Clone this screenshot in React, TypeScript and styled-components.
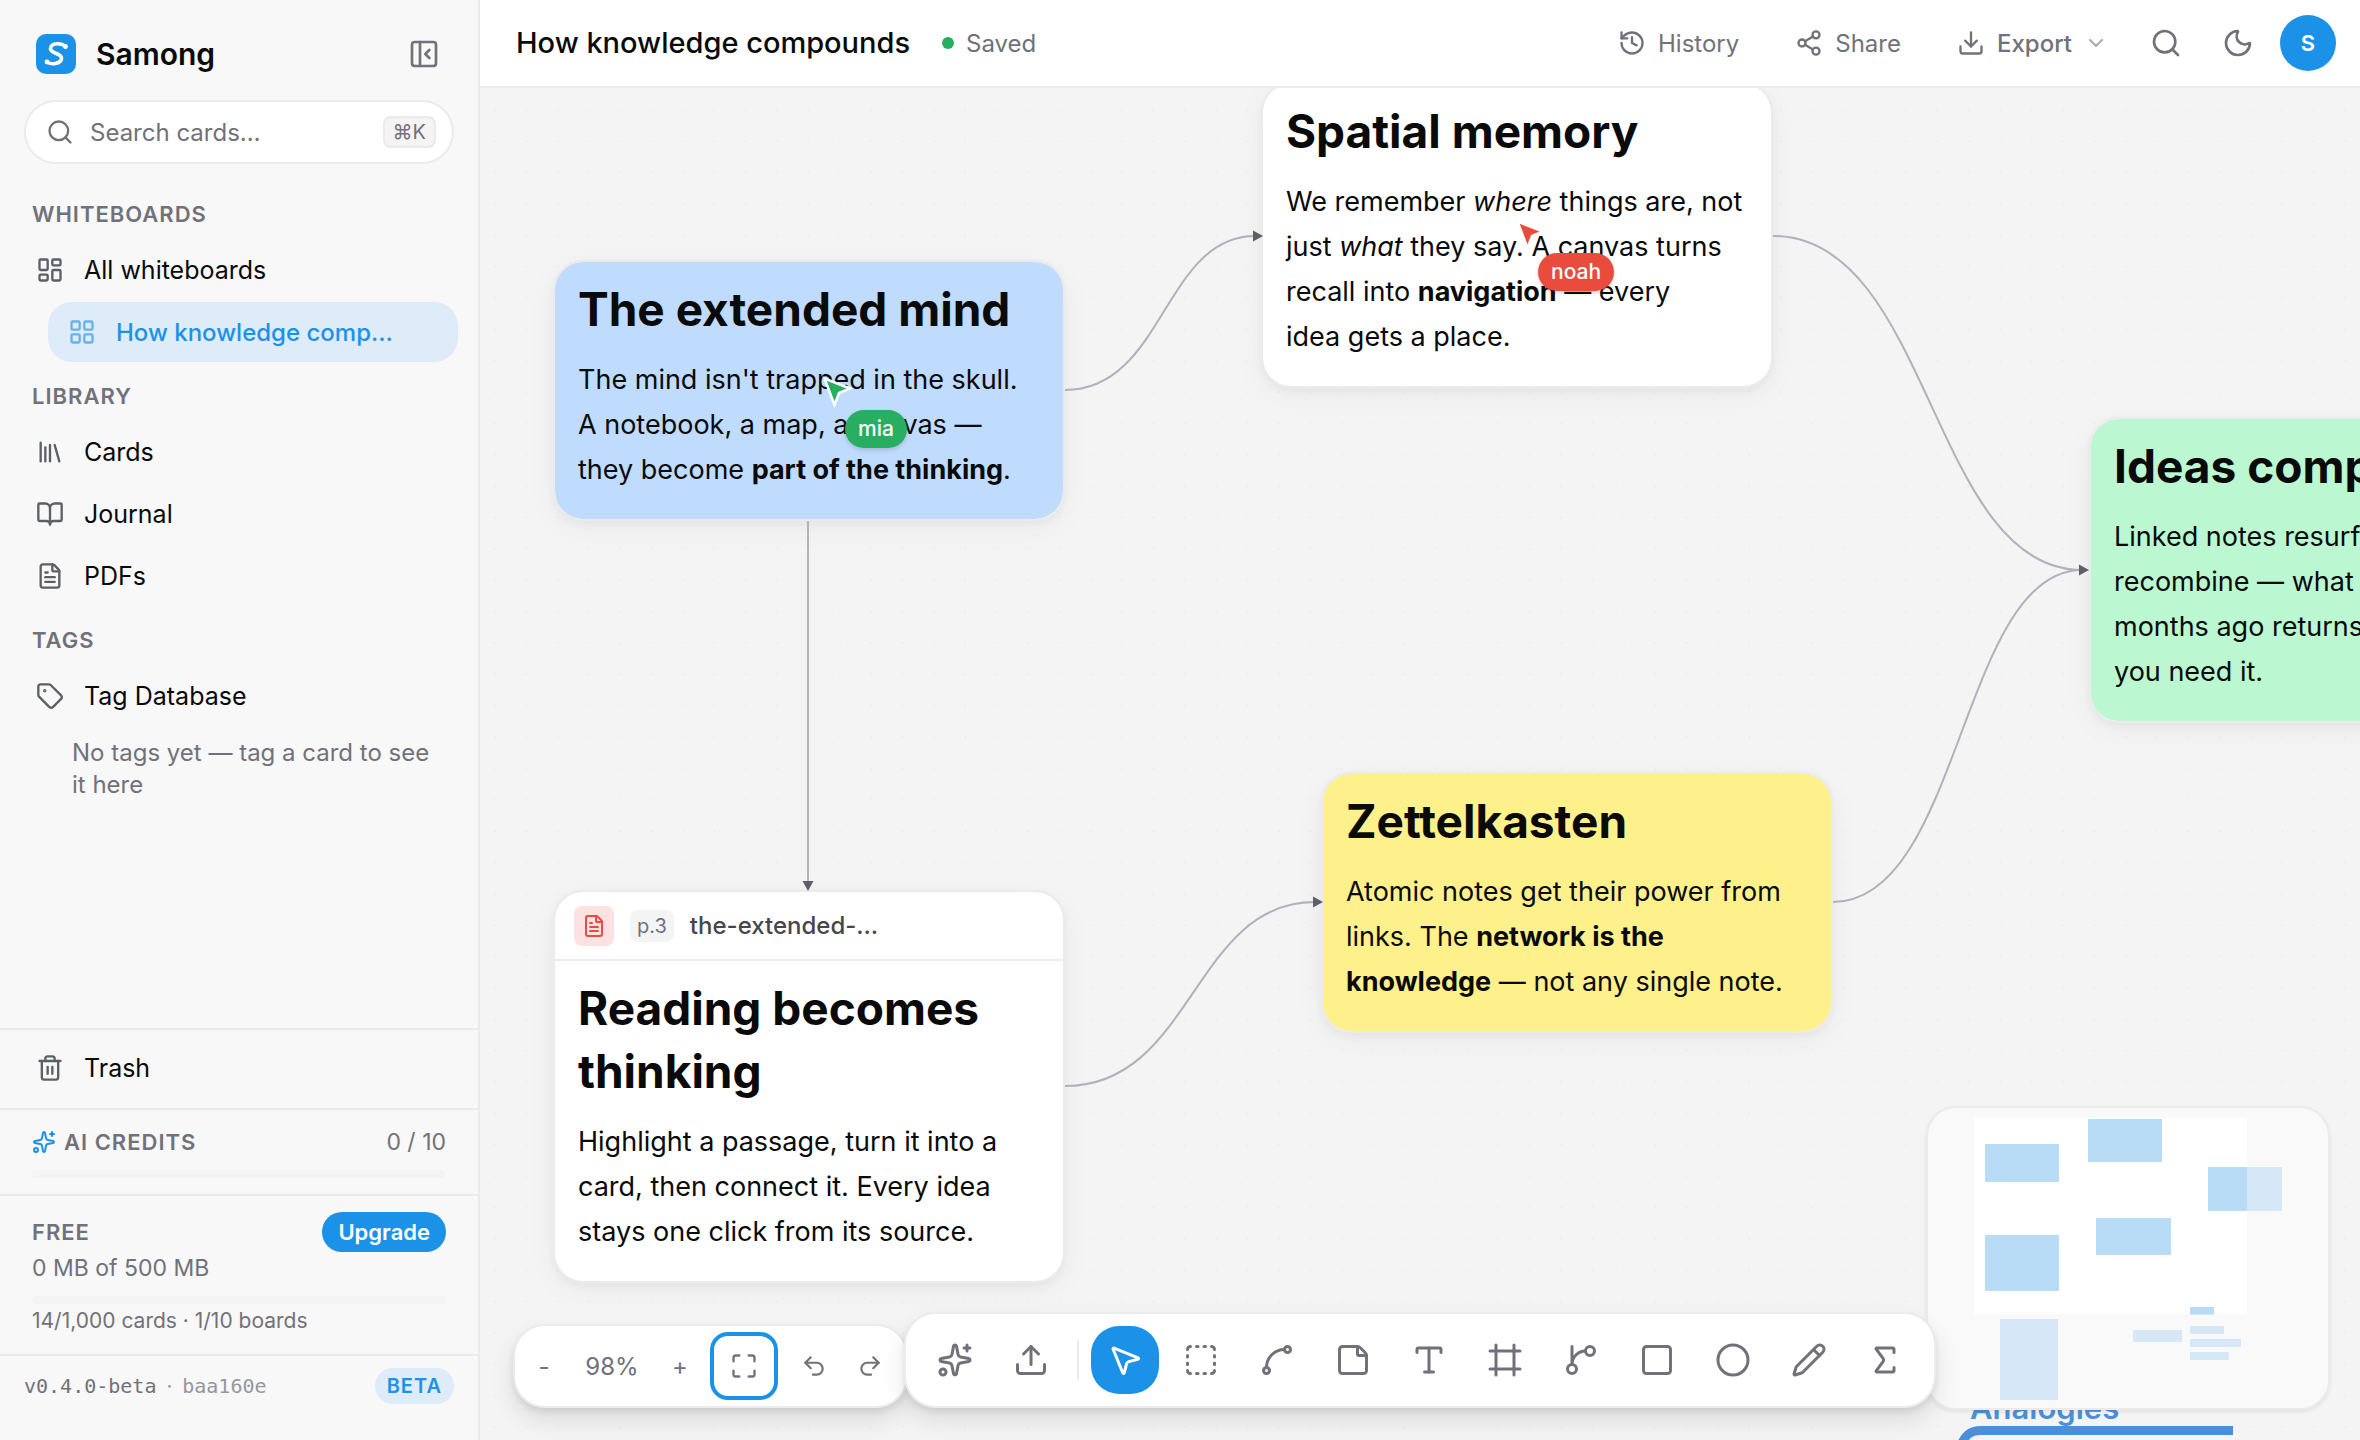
import React from "react";
import styled, { createGlobalStyle, css } from "styled-components";
import {
  BookOpen, ChevronDown, Circle, Download, FileText, Frame, History, LayoutDashboard,
  LayoutGrid, Library, Maximize, Moon, MousePointer2, PanelLeftClose, Pencil, Redo2, Search, Share2,
  Sigma, Sparkles, Spline, Square, SquareDashed, StickyNote, Tag, Trash2, Type, Undo2, Upload,
} from "lucide-react";

const blue = "#1b92e8";
const muted = "#71717a";
const ink = "#0a0a0b";
const line = "#ebebeb";

const Global = createGlobalStyle`
  *, *::before, *::after { box-sizing: border-box; }
  body { margin: 0; background: #f4f4f4; color: ${ink}; font-family: Inter, "Liberation Sans", sans-serif; }
  button, input { font: inherit; color: inherit; }
  button { border: 0; background: none; padding: 0; display: flex; align-items: center; cursor: pointer; }
  h1, h2, h3, p { margin: 0; }
  svg { display: block; flex: none; }
`;

const Shell = styled.div`
  display: grid;
  grid-template-columns: 480px minmax(0, 1fr);
  height: 100vh;
  overflow: hidden;
`;

/* ---------- sidebar ---------- */

const Sidebar = styled.aside`
  display: flex;
  flex-direction: column;
  min-height: 0;
  background: #f8f8f8;
  border-right: 2px solid ${line};
`;

const Brand = styled.div`
  display: flex;
  align-items: center;
  gap: 20px;
  height: 100px;
  padding: 8px 38px 0 36px;
`;

const BrandName = styled.h2`
  flex: 1;
  font-size: 30px;
  font-weight: 600;
  line-height: 40px;
`;

const IconButton = styled.button<{ $size: number }>`
  justify-content: center;
  width: ${(p) => p.$size}px;
  height: ${(p) => p.$size}px;
  color: ${muted};
`;

const SearchBox = styled.label`
  display: flex;
  align-items: center;
  gap: 16px;
  height: 64px;
  margin: 0 24px 16px;
  padding: 0 16px 0 20px;
  background: #fff;
  border: 2px solid ${line};
  border-radius: 32px;
  color: ${muted};
`;

const SearchInput = styled.input`
  flex: 1;
  min-width: 0;
  border: 0;
  outline: 0;
  padding: 0;
  background: transparent;
  font-size: 24px;
  &::placeholder { color: ${muted}; opacity: 1; }
`;

const Kbd = styled.kbd`
  height: 32px;
  padding: 0 8px;
  border: 2px solid ${line};
  border-radius: 8px;
  background: #f4f4f4;
  font-family: inherit;
  font-size: 20px;
  line-height: 28px;
`;

const Nav = styled.nav`
  flex: 1;
  min-height: 0;
`;

const SectionLabel = styled.h3`
  padding: 16px 32px 8px;
  font-size: 22px;
  font-weight: 600;
  line-height: 36px;
  letter-spacing: 1px;
  color: ${muted};
`;

const NavItem = styled.a<{ $active?: boolean }>`
  display: flex;
  align-items: center;
  gap: 20px;
  height: 60px;
  margin: 0 20px 0 16px;
  padding: 0 20px;
  border-radius: 24px;
  font-size: 25px;
  text-decoration: none;
  color: ${ink};
  svg { color: #5b5f66; }
  & + & { margin-top: 2px; }
  ${(p) => p.$active && css`
    margin-left: 48px;
    background: #deebf8;
    color: ${blue};
    font-size: 24px;
    font-weight: 500;
    svg { color: #68b2ec; }
  `}
`;

const EmptyNote = styled.p`
  padding: 11px 32px 0 72px;
  font-size: 24px;
  line-height: 32px;
  color: ${muted};
`;

const Panel = styled.section<{ $pad: string }>`
  border-top: 2px solid ${line};
  padding: ${(p) => p.$pad};
`;

const PanelRow = styled.div`
  display: flex;
  align-items: center;
  justify-content: space-between;
  color: ${muted};
`;

const PanelTitle = styled.h3`
  display: flex;
  align-items: center;
  gap: 8px;
  font-size: 22px;
  font-weight: 600;
  line-height: 32px;
  letter-spacing: 1px;
  svg { color: ${blue}; }
`;

const PanelText = styled.p<{ $size?: number }>`
  font-size: ${(p) => p.$size || 23}px;
  line-height: 32px;
  color: ${muted};
`;

const Meter = styled.div`
  height: 8px;
  margin: 12px 0 1px;
  border-radius: 4px;
  background: #f4f4f4;
`;

const Upgrade = styled.button`
  height: 40px;
  padding: 0 16px;
  border-radius: 20px;
  background: ${blue};
  color: #fff;
  font-size: 22px;
  font-weight: 600;
`;

const Version = styled.p`
  display: flex;
  gap: 10px;
  font-family: "DejaVu Sans Mono", monospace;
  font-size: 20px;
  line-height: 32px;
`;

const Build = styled.span`
  display: flex;
  gap: 10px;
  color: #96969c;
  &::before {
    content: "·";
    font-family: Inter, sans-serif;
  }
`;

const Beta = styled.span`
  height: 36px;
  padding: 0 12px;
  border-radius: 18px;
  background: #deebf8;
  color: ${blue};
  font-size: 20px;
  font-weight: 600;
  line-height: 36px;
  letter-spacing: 1px;
`;

/* ---------- header ---------- */

const Main = styled.main`
  display: flex;
  flex-direction: column;
  min-width: 0;
  min-height: 0;
`;

const Header = styled.header`
  display: flex;
  align-items: center;
  height: 88px;
  flex: none;
  padding: 0 24px 0 36px;
  background: #fff;
  border-bottom: 2px solid ${line};
`;

const Title = styled.h1`
  font-size: 29px;
  font-weight: 500;
  line-height: 40px;
`;

const Saved = styled.span`
  display: flex;
  align-items: center;
  gap: 12px;
  margin-left: 32px;
  font-size: 24px;
  color: ${muted};
  &::before {
    content: "";
    width: 12px;
    height: 12px;
    border-radius: 6px;
    background: #27ae60;
  }
`;

const Actions = styled.div`
  display: flex;
  align-items: center;
  gap: 8px;
  margin: 0 4px 0 auto;
`;

const Utilities = styled.div`
  display: flex;
  align-items: center;
  gap: 12px;
`;

const Action = styled.button<{ $strong?: boolean }>`
  gap: 12px;
  height: 64px;
  padding: 0 24px;
  font-size: 24px;
  font-weight: ${(p) => (p.$strong ? 500 : 400)};
  color: ${muted};
`;

const Avatar = styled.button`
  justify-content: center;
  width: 56px;
  height: 56px;
  border-radius: 28px;
  background: ${blue};
  color: #fff;
  font-size: 22px;
  font-weight: 600;
`;

/* ---------- canvas ---------- */

const Canvas = styled.div`
  position: relative;
  flex: 1;
  min-height: 0;
  overflow: hidden;
  background: #f4f4f4;
`;

const EdgeLayer = styled.svg`
  position: absolute;
  inset: 0;
  width: 100%;
  height: 100%;
`;

const Card = styled.article<{ $x: number; $y: number; $fill?: string }>`
  position: absolute;
  left: ${(p) => p.$x}px;
  top: ${(p) => p.$y}px;
  width: 512px;
  overflow: hidden;
  border: 2px solid ${line};
  border-radius: 30px;
  background: ${(p) => p.$fill || "#fff"};
  background-clip: padding-box;
  box-shadow: 0 4px 8px rgba(0, 0, 0, 0.04), 0 8px 32px rgba(0, 0, 0, 0.04);
`;

const CardBody = styled.div`
  padding: 16px 22px 27px 23px;
  h2 { font-size: 46px; font-weight: 700; line-height: 63px; margin-bottom: 16px; }
  p { font-size: 27px; line-height: 45px; }
`;

const SourceBar = styled.div`
  display: flex;
  align-items: center;
  gap: 16px;
  height: 69px;
  padding: 0 19px;
  border-bottom: 2px solid ${line};
  font-size: 24px;
  font-weight: 500;
  color: #46464c;
`;

const PdfBadge = styled.span`
  display: flex;
  align-items: center;
  justify-content: center;
  width: 40px;
  height: 40px;
  border-radius: 8px;
  background: #fee2e2;
  color: #e94b3c;
`;

const PageBadge = styled.span`
  height: 32px;
  padding: 0 7px;
  border-radius: 8px;
  background: #f4f4f5;
  color: ${muted};
  font-size: 20px;
  font-weight: 400;
  line-height: 32px;
`;

const Cursor = styled.div<{ $x: number; $y: number }>`
  position: absolute;
  left: ${(p) => p.$x}px;
  top: ${(p) => p.$y}px;
`;

const CursorName = styled.span<{ $color: string }>`
  display: block;
  height: 38px;
  margin: -2px 0 0 23px;
  padding: 0 13px;
  border-radius: 19px;
  background: ${(p) => p.$color};
  color: #fff;
  font-size: 21px;
  font-weight: 500;
  line-height: 38px;
  box-shadow: 0 2px 4px rgba(0, 0, 0, 0.16);
`;

const BranchLabel = styled.span`
  position: absolute;
  left: 1490px;
  top: 1301px;
  font-size: 31px;
  font-weight: 600;
  line-height: 38px;
  color: #4a90d9;
`;

const MiniMap = styled.div`
  position: absolute;
  right: 30px;
  bottom: 30px;
  border: 2px solid ${line};
  border-radius: 30px;
  overflow: hidden;
  background: #f9f9f9;
  box-shadow: 0 2px 4px rgba(0, 0, 0, 0.08);
`;

const Bar = styled.div`
  position: absolute;
  bottom: 32px;
  display: flex;
  align-items: center;
  border: 2px solid ${line};
  border-radius: 32px;
  background: #fff;
  color: ${muted};
  box-shadow: 0 4px 6px rgba(0, 0, 0, 0.08), 0 12px 24px rgba(0, 0, 0, 0.1);
`;

const ZoomBar = styled(Bar)`
  left: 33px;
  height: 84px;
  padding: 0 8px 0 1px;
`;

const ToolBar = styled(Bar)`
  left: 50%;
  transform: translateX(-50%);
  height: 96px;
  gap: 8px;
  padding: 0 15px;
`;

const ZoomButton = styled.button<{ $focus?: boolean }>`
  justify-content: center;
  width: ${(p) => (p.$focus ? 68 : 56)}px;
  height: ${(p) => (p.$focus ? 68 : 56)}px;
  font-size: 24px;
  ${(p) => p.$focus && css`
    margin: 0 8px 0 2px;
    border: 4px solid ${blue};
    border-radius: 18px;
  `}
`;

const ZoomValue = styled.output`
  width: 80px;
  font-size: 24px;
  text-align: center;
`;

const Tool = styled.button<{ $active?: boolean }>`
  justify-content: center;
  width: 68px;
  height: 68px;
  border-radius: 28px;
  ${(p) => p.$active && css`
    background: ${blue};
    color: #fff;
  `}
`;

const Divider = styled.span`
  width: 2px;
  height: 40px;
  margin: 0 4px;
  background: ${line};
`;

const Logo = () => (
  <svg width="40" height="40" viewBox="0 0 40 40" aria-hidden="true">
    <rect width="40" height="40" rx="10" fill={blue} />
    <path
      d="M29.5 13C27 9.5 15.5 7.5 14.5 14.5C13.8 19.5 26 19 25.5 24.5C25 30 14.5 31 11 28"
      fill="none" stroke="#fff" strokeWidth="3.6" strokeLinecap="round"
    />
    <circle cx="29.5" cy="12.5" r="2.4" fill="#fff" />
    <circle cx="11" cy="28" r="2.4" fill="#fff" />
  </svg>
);

const Branch = ({ size = 24 }: { size?: number }) => (
  <svg
    width={size} height={size} viewBox="0 0 24 24" fill="none" stroke="currentColor"
    strokeWidth="2" strokeLinecap="round" strokeLinejoin="round" aria-hidden="true"
  >
    <path d="M15 6a9 9 0 0 0-9 9V3" />
    <circle cx="18" cy="6" r="3" />
    <circle cx="6" cy="18" r="3" />
  </svg>
);

const edges = [
  "M585 302C684 302 684 148 775 148",
  "M1293 148C1451 148 1451 482 1602 482",
  "M328 433V796",
  "M585 998C713 998 713 814 835 814",
  "M1353 814C1481 814 1481 482 1602 482",
];

const arrows = [
  "M773 142.500L783 148L773 153.500Z",
  "M1599 476.500L1609 482L1599 487.500Z",
  "M833 808.500L843 814L833 819.500Z",
  "M322.500 793L328 803L333.500 793Z",
];

const mapNodes = [
  [57, 36, 74, 38], [160, 11, 74, 43], [280, 59, 74, 44], [168, 110, 75, 37], [57, 127, 74, 56],
  [72, 211, 58, 81], [205, 222, 49, 12], [262, 199, 24, 8], [262, 218, 34, 8], [262, 231, 51, 8], [262, 244, 39, 8],
];

const tools: [string, React.ElementType][] = [
  ["Marquee", SquareDashed], ["Connector", Spline], ["Card", StickyNote], ["Text", Type], ["Frame", Frame],
  ["Mind map", Branch], ["Rectangle", Square], ["Ellipse", Circle], ["Draw", Pencil], ["Formula", Sigma],
];

const Pointer = ({ color }: { color: string }) => (
  <svg width="36" height="36" viewBox="0 0 36 36" aria-hidden="true">
    <path d="M2.500 2.500L28 12.500L17 17L12.500 29Z" fill={color} stroke="#fff" strokeWidth="2.500" />
  </svg>
);

export default function App() {
  return (
    <Shell>
      <Global />
      <Sidebar>
        <Brand>
          <Logo />
          <BrandName>Samong</BrandName>
          <IconButton $size={32} aria-label="Collapse sidebar"><PanelLeftClose size={32} /></IconButton>
        </Brand>
        <SearchBox>
          <Search size={28} />
          <SearchInput type="text" placeholder="Search cards…" aria-label="Search cards" />
          <Kbd>⌘K</Kbd>
        </SearchBox>
        <Nav>
          <SectionLabel>WHITEBOARDS</SectionLabel>
          <NavItem href="#all"><LayoutDashboard size={28} />All whiteboards</NavItem>
          <NavItem href="#board" $active><LayoutGrid size={28} />How knowledge comp…</NavItem>
          <SectionLabel>LIBRARY</SectionLabel>
          <NavItem href="#cards"><Library size={28} />Cards</NavItem>
          <NavItem href="#journal"><BookOpen size={28} />Journal</NavItem>
          <NavItem href="#pdfs"><FileText size={28} />PDFs</NavItem>
          <SectionLabel>TAGS</SectionLabel>
          <NavItem href="#tags"><Tag size={28} />Tag Database</NavItem>
          <EmptyNote>No tags yet — tag a card to see it here</EmptyNote>
        </Nav>
        <Panel $pad="8px 0 10px">
          <NavItem href="#trash"><Trash2 size={28} />Trash</NavItem>
        </Panel>
        <Panel $pad="16px 32px 15px">
          <PanelRow>
            <PanelTitle><Sparkles size={24} />AI CREDITS</PanelTitle>
            <PanelText>0 / 10</PanelText>
          </PanelRow>
          <Meter />
        </Panel>
        <Panel $pad="16px 32px 17px">
          <PanelRow>
            <PanelTitle>FREE</PanelTitle>
            <Upgrade>Upgrade</Upgrade>
          </PanelRow>
          <PanelText>0 MB of 500 MB</PanelText>
          <Meter />
          <PanelText $size={21}>14/1,000 cards · 1/10 boards</PanelText>
        </Panel>
        <Panel $pad="12px 24px 36px">
          <PanelRow>
            <Version>v0.4.0-beta<Build>baa160e</Build></Version>
            <Beta>BETA</Beta>
          </PanelRow>
        </Panel>
      </Sidebar>

      <Main>
        <Header>
          <Title>How knowledge compounds</Title>
          <Saved>Saved</Saved>
          <Actions>
            <Action><History size={28} />History</Action>
            <Action><Share2 size={28} />Share</Action>
            <Action $strong><Download size={28} />Export<ChevronDown size={24} opacity={0.6} /></Action>
          </Actions>
          <Utilities>
            <IconButton $size={60} aria-label="Search"><Search size={32} /></IconButton>
            <IconButton $size={60} aria-label="Dark mode"><Moon size={32} /></IconButton>
            <Avatar aria-label="Account">S</Avatar>
          </Utilities>
        </Header>

        <Canvas>
          <EdgeLayer aria-hidden="true">
            <defs>
              <pattern id="dots" x="-1" y="5" width="31.360" height="31.360" patternUnits="userSpaceOnUse">
                <circle cx="16" cy="17" r="1" fill="#ebebed" />
              </pattern>
            </defs>
            <rect width="100%" height="100%" fill="url(#dots)" />
          </EdgeLayer>

          <Card $x={73} $y={172} $fill="#bfdbfe">
            <CardBody>
              <h2>The extended mind</h2>
              <p>The mind isn't trapped in the skull. A notebook, a map, a canvas — they become <b>part of the thinking</b>.</p>
            </CardBody>
          </Card>
          <Card $x={781} $y={-6}>
            <CardBody>
              <h2>Spatial memory</h2>
              <p>We remember <em>where</em> things are, not just <em>what</em> they say. A canvas turns recall into <b>navigation</b> — every<br />idea gets a place.</p>
            </CardBody>
          </Card>
          <Card $x={1609} $y={329} $fill="#bbf7d0">
            <CardBody>
              <h2>Ideas compound</h2>
              <p>Linked notes resurface and recombine — what you wrote months ago returns right when<br />you need it.</p>
            </CardBody>
          </Card>
          <Card $x={73} $y={802}>
            <SourceBar>
              <PdfBadge><FileText size={24} /></PdfBadge>
              <PageBadge>p.3</PageBadge>
              the-extended-…
            </SourceBar>
            <CardBody>
              <h2>Reading becomes thinking</h2>
              <p>Highlight a passage, turn it into a card, then connect it. Every idea stays one click from its source.</p>
            </CardBody>
          </Card>
          <Card $x={841} $y={684} $fill="#fef08a">
            <CardBody>
              <h2>Zettelkasten</h2>
              <p>Atomic notes get their power from links. The <b>network is the knowledge</b> — not any single note.</p>
            </CardBody>
          </Card>

          <EdgeLayer aria-hidden="true" pointerEvents="none">
            <g fill="none" stroke="#b1b1b7" strokeWidth="2">
              {edges.map((d) => <path key={d} d={d} />)}
            </g>
            <g fill="#5f6066">
              {arrows.map((d) => <path key={d} d={d} />)}
            </g>
            <path d="M1753 1342.500H1500C1490 1342.500 1484 1348 1480 1360" fill="none" stroke="#4a90d9" strokeWidth="9" />
          </EdgeLayer>
          <BranchLabel>Analogies</BranchLabel>

          <Cursor $x={342} $y={288}>
            <Pointer color="#27ae60" />
            <CursorName $color="#27ae60">mia</CursorName>
          </Cursor>
          <Cursor $x={1035} $y={131}>
            <Pointer color="#e94b3c" />
            <CursorName $color="#e94b3c">noah</CursorName>
          </Cursor>

          <MiniMap>
            <svg width="400" height="300" viewBox="0 0 400 300" aria-label="Board overview">
              <defs>
                <clipPath id="view"><rect x="46" y="10" width="273" height="196" /></clipPath>
              </defs>
              <rect x="46" y="10" width="273" height="196" fill="#fff" />
              <g fill="#d6e7f7">
                {mapNodes.map(([x, y, w, h]) => <rect key={`${x}-${y}`} x={x} y={y} width={w} height={h} rx="1" />)}
              </g>
              <g fill="#b9dcf6" clipPath="url(#view)">
                {mapNodes.map(([x, y, w, h]) => <rect key={`${x}-${y}`} x={x} y={y} width={w} height={h} rx="1" />)}
              </g>
            </svg>
          </MiniMap>

          <ZoomBar>
            <ZoomButton aria-label="Zoom out">-</ZoomButton>
            <ZoomValue>98%</ZoomValue>
            <ZoomButton aria-label="Zoom in">+</ZoomButton>
            <ZoomButton $focus aria-label="Fit to screen"><Maximize size={28} /></ZoomButton>
            <ZoomButton aria-label="Undo"><Undo2 size={26} /></ZoomButton>
            <ZoomButton aria-label="Redo"><Redo2 size={26} /></ZoomButton>
          </ZoomBar>

          <ToolBar>
            <Tool aria-label="Ask AI"><Sparkles size={36} /></Tool>
            <Tool aria-label="Upload"><Upload size={36} /></Tool>
            <Divider />
            <Tool $active aria-label="Select"><MousePointer2 size={36} /></Tool>
            {tools.map(([name, Icon]) => (
              <Tool key={name} aria-label={name}><Icon size={36} /></Tool>
            ))}
          </ToolBar>
        </Canvas>
      </Main>
    </Shell>
  );
}
